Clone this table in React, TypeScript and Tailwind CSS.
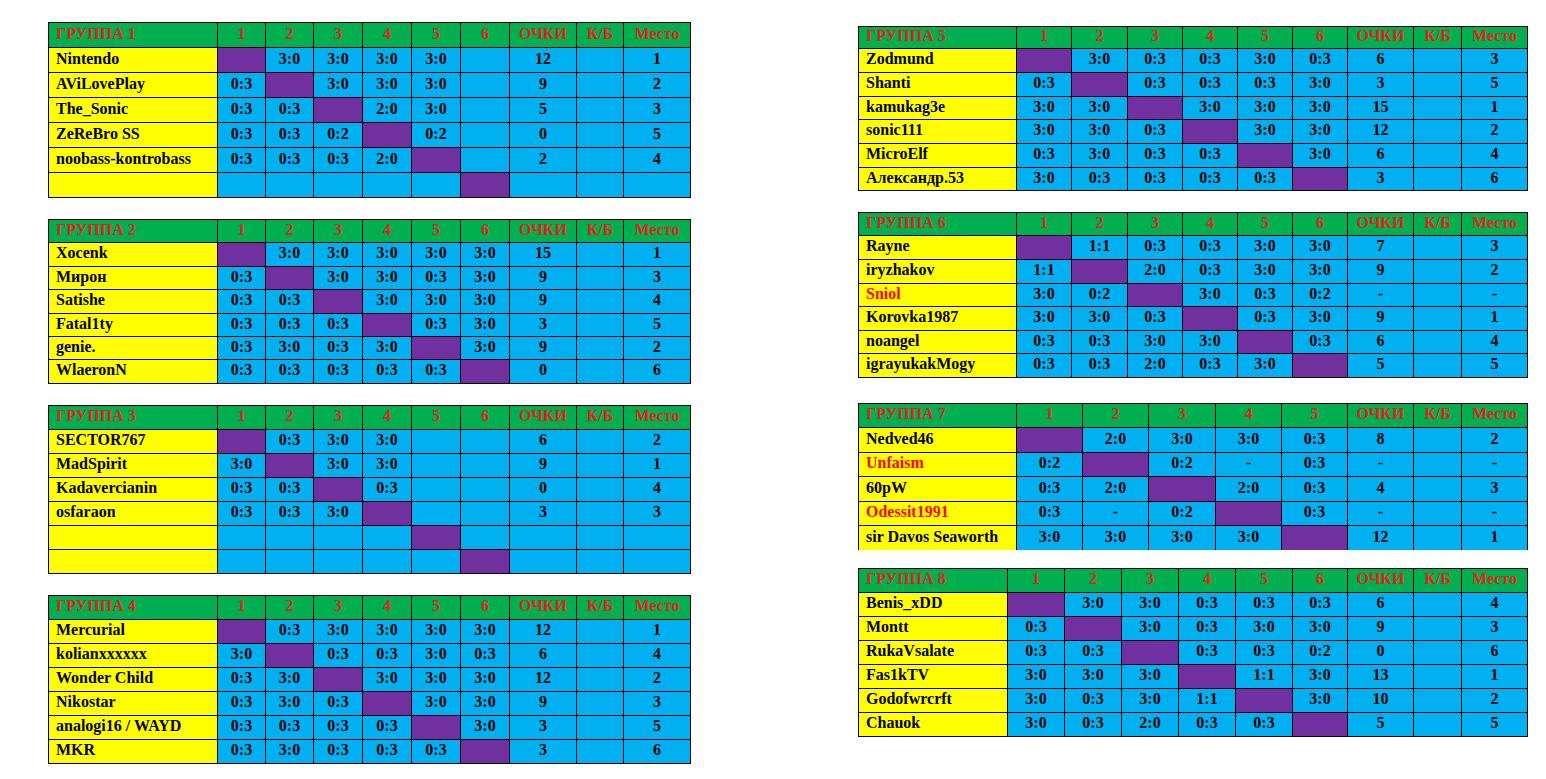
import React from "react";

type Row = { n: string; red: boolean; c: string[]; p: string; m: string };
type Group = {
  title: string;
  cols: string;
  rows: string;
  wrap: string;
  count: number;
  data: Row[];
};

const r = (n: string, c: string, p: string, m: string, red = false): Row => ({
  n,
  red,
  c: c.split(" ").map((x) => (x === "_" ? "" : x)),
  p,
  m,
});

const LEFT_COLS = "grid-cols-[168px_47px_47px_48px_48px_48px_48px_66px_46px_66px]";
const R6_COLS = "grid-cols-[157px_54px_55px_54px_54px_54px_54px_65px_47px_65px]";

const left: Group[] = [
  {
    title: "ГРУППА 1",
    cols: LEFT_COLS,
    rows: "grid-rows-[24px_24px_24px_24px_24px_24px_24px]",
    wrap: "p-px",
    count: 6,
    data: [
      r("Nintendo", "X 3:0 3:0 3:0 3:0 _", "12", "1"),
      r("AViLovePlay", "0:3 X 3:0 3:0 3:0 _", "9", "2"),
      r("The_Sonic", "0:3 0:3 X 2:0 3:0 _", "5", "3"),
      r("ZeReBro SS", "0:3 0:3 0:2 X 0:2 _", "0", "5"),
      r("noobass-kontrobass", "0:3 0:3 0:3 2:0 X _", "2", "4"),
      r("", "_ _ _ _ _ X", "", ""),
    ],
  },
  {
    title: "ГРУППА 2",
    cols: LEFT_COLS,
    rows: "grid-rows-[22px_23px_22px_23px_22px_22px_23px]",
    wrap: "p-px",
    count: 6,
    data: [
      r("Xocenk", "X 3:0 3:0 3:0 3:0 3:0", "15", "1"),
      r("Мирон", "0:3 X 3:0 3:0 0:3 3:0", "9", "3"),
      r("Satishe", "0:3 0:3 X 3:0 3:0 3:0", "9", "4"),
      r("Fatal1ty", "0:3 0:3 0:3 X 0:3 3:0", "3", "5"),
      r("genie.", "0:3 3:0 0:3 3:0 X 3:0", "9", "2"),
      r("WlaeronN", "0:3 0:3 0:3 0:3 0:3 X", "0", "6"),
    ],
  },
  {
    title: "ГРУППА 3",
    cols: LEFT_COLS,
    rows: "grid-rows-[23px_23px_23px_23px_23px_23px_23px]",
    wrap: "p-px",
    count: 6,
    data: [
      r("SECTOR767", "X 0:3 3:0 3:0 _ _", "6", "2"),
      r("MadSpirit", "3:0 X 3:0 3:0 _ _", "9", "1"),
      r("Kadavercianin", "0:3 0:3 X 0:3 _ _", "0", "4"),
      r("osfaraon", "0:3 0:3 3:0 X _ _", "3", "3"),
      r("", "_ _ _ _ X _", "", ""),
      r("", "_ _ _ _ _ X", "", ""),
    ],
  },
  {
    title: "ГРУППА 4",
    cols: LEFT_COLS,
    rows: "grid-rows-[23px_23px_23px_23px_23px_23px_23px]",
    wrap: "p-px",
    count: 6,
    data: [
      r("Mercurial", "X 0:3 3:0 3:0 3:0 3:0", "12", "1"),
      r("kolianxxxxxx", "3:0 X 0:3 0:3 3:0 0:3", "6", "4"),
      r("Wonder Child", "0:3 3:0 X 3:0 3:0 3:0", "12", "2"),
      r("Nikostar", "0:3 3:0 0:3 X 3:0 3:0", "9", "3"),
      r("analogi16 / WAYD", "0:3 0:3 0:3 0:3 X 3:0", "3", "5"),
      r("MKR", "0:3 3:0 0:3 0:3 0:3 X", "3", "6"),
    ],
  },
];

const right: Group[] = [
  {
    title: "ГРУППА 5",
    cols: R6_COLS,
    rows: "grid-rows-[21px_23px_23px_22px_23px_23px_22px]",
    wrap: "p-px",
    count: 6,
    data: [
      r("Zodmund", "X 3:0 0:3 0:3 3:0 0:3", "6", "3"),
      r("Shanti", "0:3 X 0:3 0:3 0:3 3:0", "3", "5"),
      r("kamukag3e", "3:0 3:0 X 3:0 3:0 3:0", "15", "1"),
      r("sonic111", "3:0 3:0 0:3 X 3:0 3:0", "12", "2"),
      r("MicroElf", "0:3 3:0 0:3 0:3 X 3:0", "6", "4"),
      r("Александр.53", "3:0 0:3 0:3 0:3 0:3 X", "3", "6"),
    ],
  },
  {
    title: "ГРУППА 6",
    cols: R6_COLS,
    rows: "grid-rows-[22px_23px_23px_22px_23px_22px_23px]",
    wrap: "p-px",
    count: 6,
    data: [
      r("Rayne", "X 1:1 0:3 0:3 3:0 3:0", "7", "3"),
      r("iryzhakov", "1:1 X 2:0 0:3 3:0 3:0", "9", "2"),
      r("Sniol", "3:0 0:2 X 3:0 0:3 0:2", "-", "-", true),
      r("Korovka1987", "3:0 3:0 0:3 X 0:3 3:0", "9", "1"),
      r("noangel", "0:3 0:3 3:0 3:0 X 0:3", "6", "4"),
      r("igrayukakMogy", "0:3 0:3 2:0 0:3 3:0 X", "5", "5"),
    ],
  },
  {
    title: "ГРУППА 7",
    cols: "grid-cols-[157px_65px_65px_66px_65px_65px_65px_47px_65px]",
    rows: "grid-rows-[23px_24px_23px_24px_23px_24px]",
    wrap: "px-px pt-px",
    count: 5,
    data: [
      r("Nedved46", "X 2:0 3:0 3:0 0:3", "8", "2"),
      r("Unfaism", "0:2 X 0:2 - 0:3", "-", "-", true),
      r("60pW", "0:3 2:0 X 2:0 0:3", "4", "3"),
      r("Odessit1991", "0:3 - 0:2 X 0:3", "-", "-", true),
      r("sir Davos Seaworth", "3:0 3:0 3:0 3:0 X", "12", "1"),
    ],
  },
  {
    title: "ГРУППА 8",
    cols: "grid-cols-[148px_56px_56px_56px_56px_56px_54px_65px_47px_65px]",
    rows: "grid-rows-[23px_23px_23px_23px_23px_23px_23px]",
    wrap: "p-px",
    count: 6,
    data: [
      r("Benis_xDD", "X 3:0 3:0 0:3 0:3 0:3", "6", "4"),
      r("Montt", "0:3 X 3:0 0:3 3:0 3:0", "9", "3"),
      r("RukaVsalate", "0:3 0:3 X 0:3 0:3 0:2", "0", "6"),
      r("Fas1kTV", "3:0 3:0 3:0 X 1:1 3:0", "13", "1"),
      r("Godofwrcrft", "3:0 0:3 3:0 1:1 X 3:0", "10", "2"),
      r("Chauok", "3:0 0:3 2:0 0:3 0:3 X", "5", "5"),
    ],
  },
];

function Table({ g }: { g: Group }) {
  const nums = Array.from({ length: g.count }, (_, i) => String(i + 1));
  const hdr = "bg-[#00b050] text-[#e8201c] flex items-center justify-center pb-[3px]";
  const blue = "bg-[#00b0f0] text-black flex items-center justify-center pb-[3px]";
  return (
    <div className={`grid w-fit gap-px bg-black ${g.cols} ${g.rows} ${g.wrap}`}>
      <div className="bg-[#00b050] text-[#e8201c] flex items-center pl-[7px] pb-[3px]">{g.title}</div>
      {nums.map((n) => (
        <div key={n} className={hdr}>
          {n}
        </div>
      ))}
      <div className={hdr}>ОЧКИ</div>
      <div className={hdr}>К/Б</div>
      <div className={hdr}>Место</div>
      {g.data.map((row, ri) => (
        <React.Fragment key={ri}>
          <div
            className={`bg-[#ffff00] flex items-center pl-[7px] pb-[3px] whitespace-nowrap ${
              row.red ? "text-[#ff0000]" : "text-black"
            }`}
          >
            {row.n}
          </div>
          {row.c.map((v, ci) =>
            v === "X" ? (
              <div key={ci} className="bg-[#7030a0]" />
            ) : (
              <div key={ci} className={blue}>
                {v}
              </div>
            )
          )}
          <div className={blue}>{row.p}</div>
          <div className={blue}></div>
          <div className={blue}>{row.m}</div>
        </React.Fragment>
      ))}
    </div>
  );
}

export default function App() {
  return (
    <div className="w-[1546px] h-[779px] bg-white flex items-start pl-[48px] gap-[167px] font-['Liberation_Serif',serif] font-bold text-[16px] leading-none overflow-hidden">
      <div className="flex flex-col pt-[22px] gap-[21px]">
        {left.map((g) => (
          <Table key={g.title} g={g} />
        ))}
      </div>
      <div className="flex flex-col pt-[26px]">
        <Table g={right[0]} />
        <div className="mt-[21px]">
          <Table g={right[1]} />
        </div>
        <div className="mt-[25px]">
          <Table g={right[2]} />
        </div>
        <div className="mt-[18px]">
          <Table g={right[3]} />
        </div>
      </div>
    </div>
  );
}
